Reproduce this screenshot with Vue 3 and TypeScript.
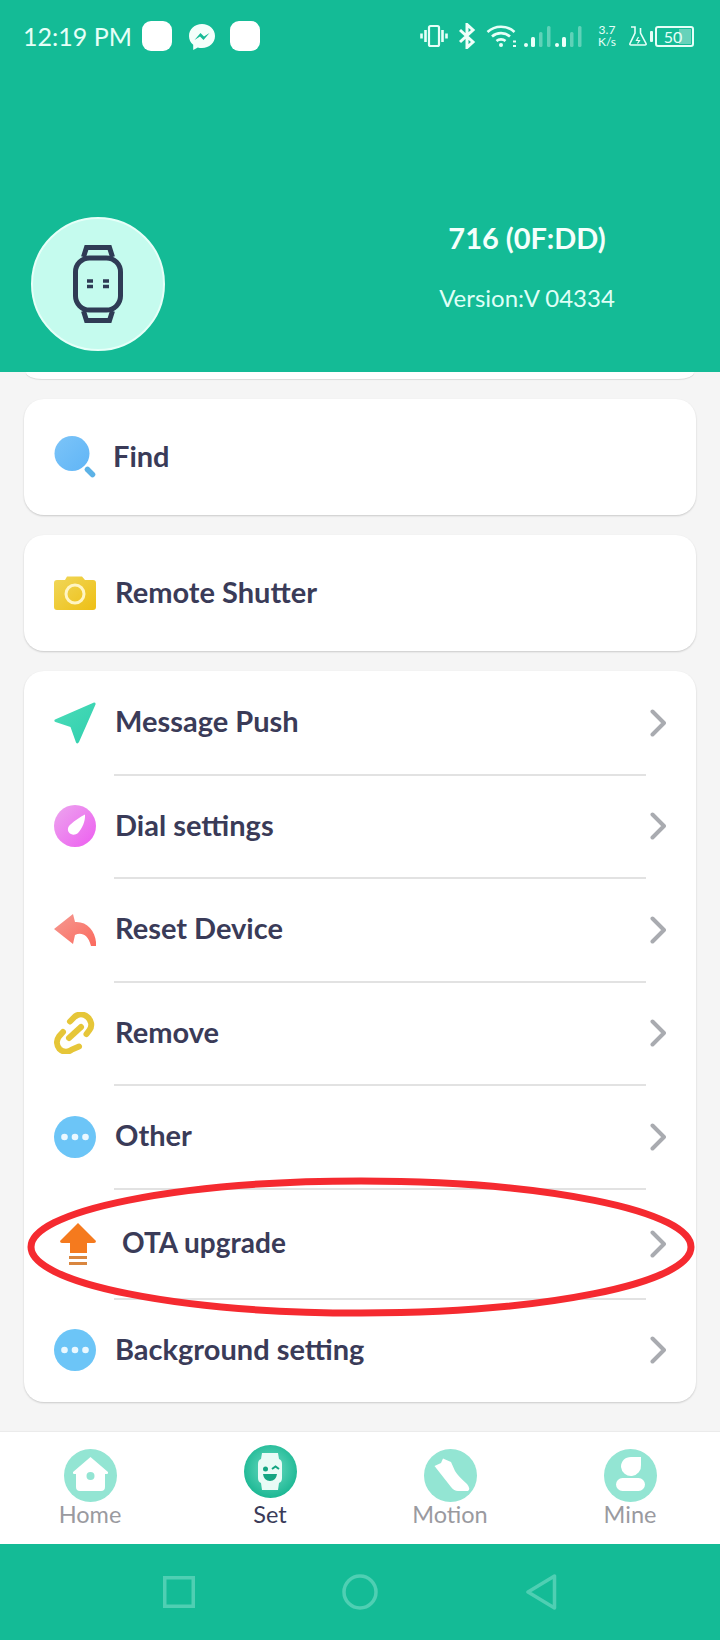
<script setup lang="ts">
interface Row { label: string; icon: string; tall?: boolean }
const rows: Row[] = [
  { label: 'Message Push', icon: 'push' },
  { label: 'Dial settings', icon: 'dial' },
  { label: 'Reset Device', icon: 'reset' },
  { label: 'Remove', icon: 'link' },
  { label: 'Other', icon: 'more' },
  { label: 'OTA upgrade', icon: 'ota', tall: true },
  { label: 'Background setting', icon: 'more' }
]
const tabs = [
  { label: 'Home', icon: 'home' },
  { label: 'Set', icon: 'set' },
  { label: 'Motion', icon: 'motion' },
  { label: 'Mine', icon: 'mine' }
]
</script>

<template>
  <div class="page">
    <header class="header">
      <div class="status">
        <div class="status-left">
          <span class="time">12:19 PM</span>
          <span class="app-square"></span>
          <svg class="messenger" width="28" height="28" viewBox="0 0 28 28">
            <path d="M14 1C6.6 1 1 6.3 1 13c0 3.6 1.5 6.7 4.2 8.800V27l4.600-2.600c1.300.4 2.700.6 4.200.6 7.400 0 13-5.300 13-12S21.400 1 14 1z" fill="#f4fffb"/>
            <path d="M6.500 17l6-7 3.500 3.500 5.500-3.500-6 7-3.500-3.500z" fill="#14bb96"/>
          </svg>
          <span class="app-square"></span>
        </div>
        <div class="status-right">
          <svg width="28" height="24" viewBox="0 0 28 24" fill="none" stroke="#e6fff8">
            <rect x="9" y="2" width="10" height="20" rx="1.500" stroke-width="2.200"/>
            <path d="M5.500 6v12M1.500 9.500v5M22.500 6v12M26.500 9.500v5" stroke-width="2.600"/>
          </svg>
          <svg class="bt" width="18" height="26" viewBox="0 0 18 26" fill="none" stroke="#f0fffa" stroke-width="3">
            <path d="M2 7l13 12-6 5.500V1.500l6 5.500L2 19"/>
          </svg>
          <svg class="wifi" width="36" height="24" viewBox="0 0 36 24" fill="none" stroke="#e6fff8" stroke-width="2.600">
            <path d="M1.500 8C9 1 21 1 28.500 8M6 12.500c5-4.500 13-4.500 18 0M10.500 17c2.500-2.200 6.500-2.200 9 0"/>
            <circle cx="15" cy="21" r="2" fill="#e6fff8" stroke="none"/>
            <path d="M27 17.500h3M27 22h3" stroke-width="2"/>
          </svg>
          <svg v-for="n in 2" :key="n" class="signal" width="28" height="24" viewBox="0 0 28 24">
            <rect x="0" y="19" width="4" height="4" rx="2" fill="#eafff9"/>
            <rect x="7" y="13" width="4" height="10" rx="1.500" fill="#eafff9"/>
            <rect x="15" y="8" width="3.500" height="15" rx="1.500" fill="#eafff9" opacity=".35"/>
            <rect x="23" y="2" width="3.500" height="21" rx="1.500" fill="#eafff9" opacity=".35"/>
          </svg>
          <div class="speed"><span>3.7</span><span>K/s</span></div>
          <svg class="flask" width="18" height="20" viewBox="0 0 18 20" fill="none" stroke="#e6fff8" stroke-width="1.600">
            <path d="M2 1h4v6L1 17.500q-.5 1.500 1 1.500h14q1.500 0 1-1.500L11.500 7V2"/>
            <path d="M9.500 11l-2 3.500h3l-2 3" stroke-width="1.200"/>
          </svg>
          <div class="battery">
            <span class="nub"></span>
            <div class="batt-body"><span class="batt-fill"></span><span class="batt-text">50</span></div>
          </div>
        </div>
      </div>

      <div class="device">
        <div class="avatar">
          <svg width="50" height="78" viewBox="0 0 50 78" fill="none" stroke="#2f3b55" stroke-width="5">
            <path d="M10.500 12L13.500 2.500h23L39.500 12M10.500 66l3 9.500h23L39.500 66"/>
            <rect x="2.500" y="13" width="45" height="52" rx="14"/>
            <path d="M14 36h6M14 41.500h6M30 36h6M30 41.500h6" stroke-width="3.500"/>
          </svg>
        </div>
        <div class="device-info">
          <div class="device-name">716 (0F:DD)</div>
          <div class="device-version">Version:V 04334</div>
        </div>
      </div>
    </header>

    <div class="clipped"></div>

    <main class="list">
      <section class="card single">
        <div class="row">
          <svg class="ic" width="42" height="42" viewBox="0 0 42 42">
            <defs><linearGradient id="gFind" x1="0" y1="0" x2="1" y2="1"><stop offset="0" stop-color="#7cc4f8"/><stop offset="1" stop-color="#60b5f6"/></linearGradient></defs>
            <circle cx="18" cy="17.500" r="17.500" fill="url(#gFind)"/>
            <path d="M33.500 33.500l5 5" stroke="#5cb2e6" stroke-width="5.500" stroke-linecap="round"/>
          </svg>
          <span class="label find">Find</span>
        </div>
      </section>

      <section class="card single">
        <div class="row">
          <svg class="ic" width="42" height="34" viewBox="0 0 42 34">
            <defs><linearGradient id="gCam" x1="0" y1="0" x2="1" y2="1"><stop offset="0" stop-color="#f0d75a"/><stop offset="1" stop-color="#eebf14"/></linearGradient></defs>
            <path d="M3 4h8l2-3.500h15L31 4h8q3 0 3 3v24q0 3-3 3H3q-3 0-3-3V7q0-3 3-3z" fill="url(#gCam)"/>
            <circle cx="21" cy="18" r="9" fill="none" stroke="#fff5c4" stroke-width="3"/>
          </svg>
          <span class="label">Remote Shutter</span>
        </div>
      </section>

      <section class="card">
        <div v-for="(r, i) in rows" :key="r.label" class="row item" :class="{ tall: r.tall, last: i === rows.length - 1 }">
          <svg v-if="r.icon === 'push'" class="ic" width="42" height="42" viewBox="0 0 42 42">
            <defs><linearGradient id="gPush" x1="0" y1="0" x2="1" y2="1"><stop offset="0" stop-color="#4bdcb8"/><stop offset="1" stop-color="#30cfae"/></linearGradient></defs>
            <path d="M40 .5q2 0 1.500 2L25 40q-1.500 2.500-3 .5L16.500 25 1.500 20q-2-1-.5-2.500z" fill="url(#gPush)"/>
          </svg>
          <svg v-else-if="r.icon === 'dial'" class="ic" width="42" height="42" viewBox="0 0 42 42">
            <defs><linearGradient id="gDial" x1="0" y1="0" x2="1" y2="1"><stop offset="0" stop-color="#eca6ee"/><stop offset="1" stop-color="#ed5df0"/></linearGradient></defs>
            <circle cx="21" cy="21" r="21" fill="url(#gDial)"/>
            <path d="M31 9.500c.5 7-3 14-7 18.500-3 2.500-7 2-9-.5-2-3-1-6 1.500-8C21 15.500 26 12 31 9.500z" fill="#fff"/>
          </svg>
          <svg v-else-if="r.icon === 'reset'" class="ic" width="42" height="32" viewBox="0 0 42 32">
            <defs><linearGradient id="gReset" x1="0" y1="0" x2="1" y2="1"><stop offset="0" stop-color="#f59a92"/><stop offset="1" stop-color="#fb6a5e"/></linearGradient></defs>
            <path d="M19 0L0 15l19 15 2-9c6-3 13-1 16 11h5C43 19 34 7 21 8z" fill="url(#gReset)"/>
          </svg>
          <svg v-else-if="r.icon === 'link'" class="ic" width="42" height="42" viewBox="0 0 42 42" fill="none" stroke="#e6c638" stroke-width="6" stroke-linecap="round">
            <path d="M16 9.500l5-5c4-3 9-2.500 12.500.500 4 3.500 5 9 2 13l-3 4"/>
            <path d="M9 20l-4 4.500c-3 4-2.500 9 .5 12.500 3.500 3.500 9 3.500 12.500.5l7-3" />
            <path d="M15 26l12-11" />
          </svg>
          <svg v-else-if="r.icon === 'more'" class="ic" width="42" height="42" viewBox="0 0 42 42">
            <circle cx="21" cy="21" r="21" fill="#6cc5f7"/>
            <circle cx="10.500" cy="21" r="3.300" fill="#eaf8ff"/>
            <circle cx="21" cy="21" r="3.300" fill="#eaf8ff"/>
            <circle cx="31.500" cy="21" r="3.300" fill="#eaf8ff"/>
          </svg>
          <svg v-else class="ic ota-ic" width="36" height="42" viewBox="0 0 36 42">
            <path d="M18 0L36 18q0 2-2 2h-7v10H10V20H2q-2 0-2-2z" fill="#f57a1e"/>
            <path d="M9 33h18v3H9zM9 39h18v3H9z" fill="#d9863f"/>
          </svg>
          <span class="label" :class="{ 'ota-label': r.tall }">{{ r.label }}</span>
          <svg class="chev" width="16" height="28" viewBox="0 0 16 28" fill="none" stroke="#a9abb0" stroke-width="4" stroke-linecap="round" stroke-linejoin="round">
            <path d="M2.500 2.500L14 14 2.500 25.500"/>
          </svg>
        </div>
      </section>
    </main>

    <nav class="tabs">
      <div v-for="t in tabs" :key="t.label" class="tab" :class="{ active: t.icon === 'set' }">
        <svg v-if="t.icon === 'home'" width="53" height="53" viewBox="0 0 53 53">
          <circle cx="26.500" cy="26.500" r="26.500" fill="#93e5d3"/>
          <path d="M26.500 8L44 23q.5 2-1 2h-2v13q0 4-4 4H16q-4 0-4-4V25h-2q-1.500 0-1-2z" fill="#fff"/>
          <circle cx="26.500" cy="27" r="4" fill="#93e5d3"/>
        </svg>
        <svg v-else-if="t.icon === 'set'" width="53" height="53" viewBox="0 0 53 53">
          <defs><radialGradient id="gSet" cx=".5" cy=".45" r=".6"><stop offset="0" stop-color="#6fdcc3"/><stop offset="1" stop-color="#14b48f"/></radialGradient></defs>
          <circle cx="26.500" cy="26.500" r="26.500" fill="url(#gSet)"/>
          <path d="M18 8h16l1 6q3 1 3 5v14q0 4-3 5l-1 7H18l-1-7q-3-1-3-5V19q0-4 3-5z" fill="#e9fbf6"/>
          <circle cx="21.500" cy="24" r="2.500" fill="#14a582"/>
          <path d="M28 24l3.500-2.500L35 24" fill="none" stroke="#14a582" stroke-width="2"/>
          <path d="M19 29h14q-1 7-7 7t-7-7z" fill="#14a582"/>
        </svg>
        <svg v-else-if="t.icon === 'motion'" width="53" height="53" viewBox="0 0 53 53">
          <circle cx="26.500" cy="26.500" r="26.500" fill="#93e5d3"/>
          <path d="M10.500 17l6.500-3 2-4.500 8 3.500 4 9q3 5 12 13 4 5 1 7H34q-4 0-7-4z" fill="#fff"/>
        </svg>
        <svg v-else width="53" height="53" viewBox="0 0 53 53">
          <circle cx="26.500" cy="26.500" r="26.500" fill="#93e5d3"/>
          <path d="M37 8v8a10 10 0 1 1-20 2c0-6 4-10 10-10z" fill="#fff"/>
          <rect x="12" y="29" width="29" height="13" rx="6.500" fill="#fff"/>
        </svg>
        <span class="tab-label">{{ t.label }}</span>
      </div>
    </nav>

    <footer class="nav">
      <svg width="32" height="32" viewBox="0 0 32 32" fill="none" stroke="#4fcfb3" stroke-width="3.500"><rect x="1.750" y="1.750" width="28.500" height="28.500"/></svg>
      <svg width="36" height="36" viewBox="0 0 36 36" fill="none" stroke="#4fcfb3" stroke-width="3.500"><circle cx="18" cy="18" r="16"/></svg>
      <svg width="32" height="36" viewBox="0 0 32 36" fill="none" stroke="#4fcfb3" stroke-width="3.500" stroke-linejoin="round"><path d="M29.500 2v32L3 18z"/></svg>
    </footer>

    <svg class="circle-mark" width="668" height="142" viewBox="0 0 668 142" fill="none" aria-hidden="true">
      <ellipse cx="334" cy="71" rx="330" ry="66" stroke="#f52a30" stroke-width="7"/>
    </svg>
  </div>
</template>

<style>
html, body { margin: 0; padding: 0; background: #f5f5f5; }
</style>

<style scoped>
.page {
  position: relative;
  width: 720px;
  height: 1640px;
  overflow: hidden;
  display: flex;
  flex-direction: column;
  background: #f5f5f5;
  font-family: Lato, "Open Sans", sans-serif;
}
.header {
  height: 372px;
  flex: none;
  background: #14bb96;
  color: #ecfffa;
  display: flex;
  flex-direction: column;
}
.status {
  display: flex;
  justify-content: space-between;
  align-items: center;
  height: 30px;
  margin-top: 21px;
  padding: 0 26px 0 23px;
}
.status-left { display: flex; align-items: center; }
.time { font-size: 25px; width: 119px; color: #e6fff8; white-space: nowrap; }
.app-square { width: 30px; height: 30px; background: #fff; border-radius: 9px; }
.messenger { margin: 2px 14px 0 16px; }
.status-right { display: flex; align-items: center; }
.bt { margin-left: 10px; }
.wifi { margin-left: 10px; margin-right: -3px; }
.signal { margin-left: 5px; }
.signal + .signal { margin-left: 3px; }
.speed {
  display: flex;
  flex-direction: column;
  align-items: center;
  font-size: 12px;
  line-height: 12px;
  width: 24px;
  margin-left: 12px;
  color: #e6fff8;
}
.flask { margin-left: 10px; }
.battery { display: flex; align-items: center; margin-left: 3px; }
.nub { width: 3px; height: 11px; background: #e6fff8; border-radius: 1px; margin-right: 2px; }
.batt-body {
  position: relative;
  width: 39px;
  height: 21px;
  box-sizing: border-box;
  border: 2px solid #e6fff8;
  border-radius: 3px;
  display: flex;
  align-items: center;
  justify-content: center;
}
.batt-fill { position: absolute; right: 1px; top: 1px; bottom: 1px; width: 12px; background: rgba(255, 255, 255, .35); }
.batt-text { position: relative; font-size: 16px; color: #e6fff8; margin-right: 3px; }
.device { display: flex; align-items: flex-start; flex: 1; padding: 0 0 0 31px; }
.avatar {
  width: 134px;
  height: 134px;
  margin-top: 166px;
  box-sizing: border-box;
  border-radius: 50%;
  background: #c5fbee;
  border: 2px solid #e6fff8;
  display: flex;
  align-items: center;
  justify-content: center;
}
.device-info { width: 200px; margin-left: 262px; margin-top: 167px; white-space: nowrap; display: flex; flex-direction: column; align-items: center; }
.device-name { font-size: 29px; font-weight: 700; line-height: 40px; color: #f4fffc; }
.device-version { font-size: 24px; line-height: 30px; margin-top: 25px; color: #dffff6; }
.clipped {
  height: 7px;
  flex: none;
  margin: 0 26px;
  background: #fff;
  border-radius: 0 0 16px 16px / 0 0 7px 7px;
  box-shadow: 0 1px 1px rgba(0, 0, 0, .1);
}
.list { display: flex; flex-direction: column; gap: 20px; padding: 20px 24px 0; }
.card { background: #fff; border-radius: 20px; box-shadow: 0 1px 2px rgba(0, 0, 0, .18); }
.single .row { height: 116px; }
.row { display: flex; align-items: center; padding: 0 30px; position: relative; }
.item { height: 103.500px; box-sizing: border-box; }
.item::after { content: ""; position: absolute; left: 90px; right: 50px; bottom: -1px; height: 2px; background: #e2e2e2; }
.item.last { height: 103px; }
.item.last::after { display: none; }
.item.tall { height: 110px; }
.ic { flex: none; }
.label { margin-left: 19px; padding-bottom: 4px; font-size: 29px; font-weight: 700; color: #3a3b58; white-space: nowrap; }
.label.find { margin-left: 17px; }
.ota-ic { margin-left: 6px; }
.label.ota-label { margin-left: 26px; font-size: 28px; }
.chev { margin-left: auto; margin-right: 0; }
.tabs { display: grid; grid-template-columns: repeat(4, 1fr); height: 112px; margin-top: auto; background: #fff; flex: none; box-shadow: 0 -1px 1px rgba(0,0,0,.04); }
.tab { display: flex; flex-direction: column; align-items: center; padding-top: 17px; }
.tab.active { padding-top: 13px; }
.tab-label { font-size: 23.500px; line-height: 28px; margin-top: -2px; color: #9a9a9f; }
.tab.active .tab-label { color: #3a3b58; margin-top: 2px; }
.nav { height: 96px; flex: none; background: #14bb96; display: flex; align-items: center; justify-content: center; gap: 147px; }
.circle-mark { position: absolute; left: 27px; top: 1176px; }
</style>
